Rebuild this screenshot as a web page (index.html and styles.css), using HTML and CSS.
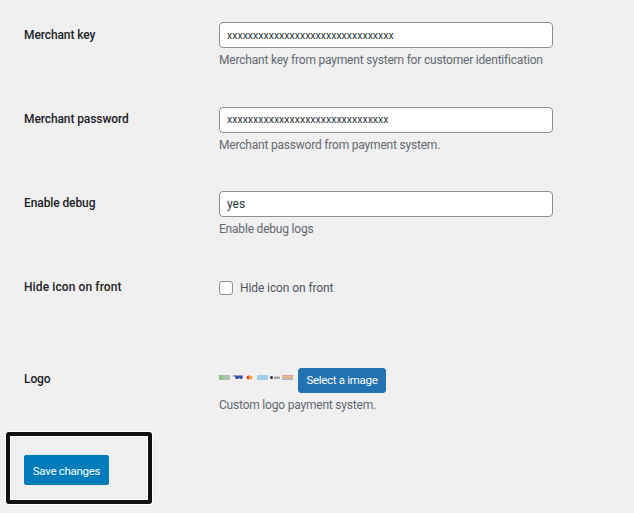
FILE: index.html
```html
<!DOCTYPE html>
<html lang="en">
<head>
  <meta charset="UTF-8" />
  <meta name="viewport" content="width=device-width, initial-scale=1" />
  <title>Payment settings</title>
  <link rel="stylesheet" href="styles.css">
</head>
<body>
  <form class="settings">
    <div class="row row-text">
      <label class="row-label row-label-first" for="merchant-key">Merchant key</label>
      <div class="row-field">
        <input type="text" id="merchant-key" class="text-input text-input-masked" value="xxxxxxxxxxxxxxxxxxxxxxxxxxxxxxxx" />
        <p class="hint">Merchant key from payment system for customer identification</p>
      </div>
    </div>

    <div class="row row-text">
      <label class="row-label" for="merchant-password">Merchant password</label>
      <div class="row-field">
        <input type="text" id="merchant-password" class="text-input text-input-masked" value="xxxxxxxxxxxxxxxxxxxxxxxxxxxxxxx" />
        <p class="hint">Merchant password from payment system.</p>
      </div>
    </div>

    <div class="row row-text">
      <label class="row-label" for="enable-debug">Enable debug</label>
      <div class="row-field">
        <input type="text" id="enable-debug" class="text-input" value="yes" />
        <p class="hint">Enable debug logs</p>
      </div>
    </div>

    <div class="row row-check">
      <label class="row-label" for="hide-icon">Hide icon on front</label>
      <div class="row-field">
        <label class="check">
          <input type="checkbox" id="hide-icon" class="check-box" />
          <span>Hide icon on front</span>
        </label>
      </div>
    </div>

    <div class="row row-logo">
      <span class="row-label">Logo</span>
      <div class="row-field">
        <div class="logo-line">
          <svg class="cards" width="74" height="8" viewBox="0 0 74 8" aria-hidden="true">
            <rect x="0" y="1" width="4" height="5" fill="#8fc08a" />
            <rect x="4" y="1" width="7" height="5" fill="#b5c0b5" />
            <path d="M14 1.500h10l-.8 3.500h-2.400l-.6-1.600-.8 1.600h-2.800l-.6-2.800-2 .2z" fill="#3a4fa6" />
            <circle cx="29.500" cy="3.500" r="2" fill="#e3342c" />
            <circle cx="31.500" cy="3.500" r="2" fill="#f2a33a" />
            <rect x="38" y="1" width="11" height="5" fill="#a8cde8" />
            <circle cx="52.500" cy="3.500" r="1.500" fill="#333333" />
            <rect x="55" y="2.500" width="6" height="2.500" fill="#a6a6a6" />
            <rect x="63" y="1" width="11" height="1.500" fill="#d9a19a" />
            <rect x="63" y="2.500" width="11" height="2" fill="#d8b070" />
            <rect x="63" y="4.500" width="11" height="1.500" fill="#b9a6c8" />
          </svg>
          <button type="button" class="btn btn-select">Select a image</button>
        </div>
        <p class="hint">Custom logo payment system.</p>
      </div>
    </div>

    <div class="save-box">
      <button type="button" class="btn btn-save">Save changes</button>
    </div>
  </form>
</body>
</html>
```

FILE: styles.css
```css
* {
  box-sizing: border-box;
}

html, body {
  height: 100%;
}

body {
  margin: 0;
  overflow: hidden;
  background: #f0f0f1;
  color: #3c434a;
  font-family: Roboto, "Open Sans", sans-serif;
  font-size: 12px;
}

.settings {
  padding-top: 22px;
}

.row {
  display: grid;
  grid-template-columns: 195px 334px;
  padding-left: 24px;
}

.row-text {
  height: 84.5px;
}

.row-check {
  height: 92px;
}

.row-logo {
  height: 65px;
}

.row-label {
  padding-top: 5px;
  font-weight: 500;
  letter-spacing: -0.1px;
  color: #1d2327;
}

.row-label-first {
  padding-top: 6px;
}

.row-check .row-label {
  padding-top: 4px;
  letter-spacing: 0.1px;
}

.row-logo .row-label {
  padding-top: 4px;
}

.text-input {
  display: block;
  width: 100%;
  height: 26px;
  padding: 0 7px;
  border: 1px solid #8c8f94;
  border-radius: 4px;
  background: #ffffff;
  color: #2c3338;
  font: inherit;
}

.text-input-masked {
  font-size: 10.500px;
}

.hint {
  margin: 5px 0 0;
  letter-spacing: -0.2px;
  color: #646970;
}

.check {
  display: flex;
  align-items: center;
  gap: 7px;
  padding-top: 5px;
  letter-spacing: -0.1px;
  color: #50575e;
}

.check-box {
  appearance: none;
  width: 14px;
  height: 14px;
  margin: 0;
  border: 1px solid #8c8f94;
  border-radius: 3px;
  background: #ffffff;
}

.logo-line {
  display: flex;
  align-items: center;
  gap: 5px;
}

.cards {
  align-self: flex-start;
  margin-top: 6px;
}

.btn {
  border-radius: 3px;
  color: #ffffff;
  font: inherit;
  font-size: 11.500px;
  letter-spacing: -0.3px;
  cursor: pointer;
}

.btn-select {
  width: 88px;
  height: 25px;
  padding: 0;
  border: 1px solid #2271b1;
  background: #2271b1;
}

.btn-save {
  width: 85px;
  height: 30px;
  padding: 2px 0 0;
  border: 1px solid #007cba;
  border-radius: 2px;
  background: #007cba;
}

.save-box {
  width: 146px;
  height: 72px;
  margin: -0.500px 0 0 6px;
  padding: 19px 0 0 14px;
  border: 4px solid #111111;
  border-radius: 3px;
  box-shadow: 0 0 0 1px #ffffff, inset 0 0 0 1px #ffffff;
}
```
